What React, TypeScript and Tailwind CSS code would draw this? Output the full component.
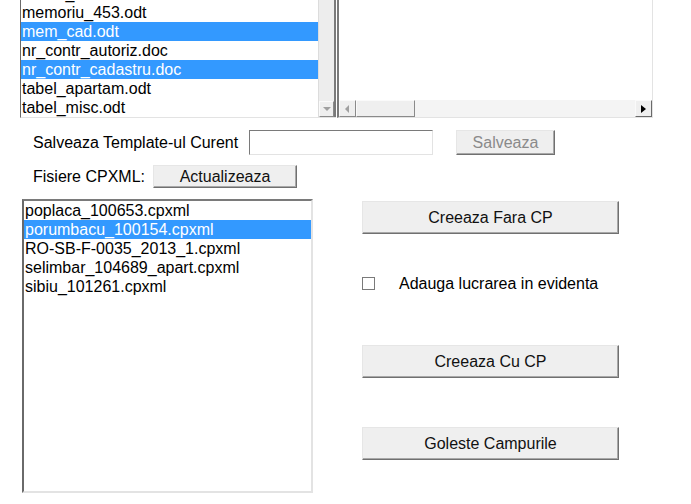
import React from "react";

const topFiles = [
  { name: "anexa_1.odt", sel: false },
  { name: "memoriu_453.odt", sel: false },
  { name: "mem_cad.odt", sel: true },
  { name: "nr_contr_autoriz.doc", sel: false },
  { name: "nr_contr_cadastru.doc", sel: true },
  { name: "tabel_apartam.odt", sel: false },
  { name: "tabel_misc.odt", sel: false },
];

const cpxml = [
  { name: "poplaca_100653.cpxml", sel: false },
  { name: "porumbacu_100154.cpxml", sel: true },
  { name: "RO-SB-F-0035_2013_1.cpxml", sel: false },
  { name: "selimbar_104689_apart.cpxml", sel: false },
  { name: "sibiu_101261.cpxml", sel: false },
];

function Btn({ children, className = "", disabled = false }: { children: React.ReactNode; className?: string; disabled?: boolean }) {
  return (
    <button
      type="button"
      className={`flex items-center justify-center bg-[#efefef] border border-t-[#e6e6e6] border-l-[#e6e6e6] border-r-[#707070] border-b-[#707070] shadow-[inset_-1px_-1px_0_#a8a8a8] ${disabled ? "text-[#8a8a8a]" : "text-[#111]"} ${className}`}
    >
      {children}
    </button>
  );
}

export default function App() {
  return (
    <div className="w-[691px] h-[504px] bg-white overflow-hidden text-[16px] leading-[19px] text-black" style={{ fontFamily: '"Liberation Sans", Arial, sans-serif' }}>
      {/* top split pane */}
      <div className="flex h-[118px] pl-[20px]">
        <div className="flex w-[316px] border-l border-l-[#6a6a6a] border-b border-b-[#e3e3e3]">
          <div className="flex-1 overflow-hidden">
            <div className="mt-[-16px] flex flex-col">
              {topFiles.map((f) => (
                <div key={f.name} className={`h-[19px] pl-[1px] whitespace-nowrap ${f.sel ? "bg-[#3399ff] text-white" : ""}`}>
                  {f.name}
                </div>
              ))}
            </div>
          </div>
          <div className="w-[18px] flex flex-col justify-end bg-[#ededed] border-l border-l-[#dcdcdc] border-r-2 border-r-[#7a7a7a]">
            <div className="h-[16px] flex items-center justify-center bg-[#efefef] border border-t-[#fafafa] border-l-[#fafafa] border-r-[#8a8a8a] border-b-[#8a8a8a]">
              <svg width="8" height="5" viewBox="0 0 8 5"><path d="M0 0h8L4 4z" fill="#a0a0a0" /></svg>
            </div>
          </div>
        </div>
        <div className="ml-[1px] flex flex-col w-[316px] border-l-2 border-l-[#7a7a7a] border-r border-r-[#e3e3e3] border-b border-b-[#e3e3e3]">
          <div className="flex-1" />
          <div className="h-[17px] flex bg-[#f4f4f4]">
            <div className="w-[17px] flex items-center justify-center bg-[#efefef] border border-t-[#fafafa] border-l-[#fafafa] border-r-[#8a8a8a] border-b-[#8a8a8a]">
              <svg width="5" height="8" viewBox="0 0 5 8"><path d="M4 0v8L0 4z" fill="#a0a0a0" /></svg>
            </div>
            <div className="w-[59px] bg-[#efefef] border border-t-[#fafafa] border-l-[#fafafa] border-r-[#8a8a8a] border-b-[#8a8a8a]" />
            <div className="flex-1" />
            <div className="w-[17px] flex items-center justify-center bg-[#efefef] border border-t-[#fafafa] border-l-[#fafafa] border-r-[#6a6a6a] border-b-[#6a6a6a]">
              <svg width="5" height="8" viewBox="0 0 5 8"><path d="M0 0v8L5 4z" fill="#000" /></svg>
            </div>
          </div>
        </div>
      </div>

      {/* save template row */}
      <div className="flex items-center h-[25px] mt-[12px] pl-[33px]">
        <span className="w-[216px] whitespace-nowrap">Salveaza Template-ul Curent</span>
        <div className="w-[184px] h-[25px] bg-white border border-t-[#7a7a7a] border-l-[#7a7a7a] border-r-[#e3e3e3] border-b-[#e3e3e3]" />
        <Btn disabled className="ml-[23px] w-[99px] h-[25px]">Salveaza</Btn>
      </div>

      {/* cpxml row */}
      <div className="flex items-center h-[23px] mt-[10px] pl-[33px]">
        <span className="w-[120px] whitespace-nowrap">Fisiere CPXML:</span>
        <Btn className="w-[144px] h-[23px]">Actualizeaza</Btn>
      </div>

      {/* bottom area */}
      <div className="flex mt-[11px] pl-[22px]">
        <div className="w-[291px] h-[294px] bg-white border-2 border-t-[#7a7a7a] border-l-[#6a6a6a] border-r-[#e3e3e3] border-b-[#e3e3e3]">
          {cpxml.map((f) => (
            <div key={f.name} className={`h-[19px] pl-[1px] whitespace-nowrap ${f.sel ? "bg-[#3399ff] text-white" : ""}`}>
              {f.name}
            </div>
          ))}
        </div>
        <div className="ml-[49px] flex flex-col pt-[2px]">
          <Btn className="w-[257px] h-[33px]">Creeaza Fara CP</Btn>
          <div className="flex items-center mt-[42px] h-[14px]">
            <div className="w-[13px] h-[13px] border border-[#7a7a7a] bg-white" />
            <span className="ml-[24px] whitespace-nowrap">Adauga lucrarea in evidenta</span>
          </div>
          <Btn className="w-[257px] h-[33px] mt-[55px]">Creeaza Cu CP</Btn>
          <Btn className="w-[257px] h-[33px] mt-[49px]">Goleste Campurile</Btn>
        </div>
      </div>
    </div>
  );
}
